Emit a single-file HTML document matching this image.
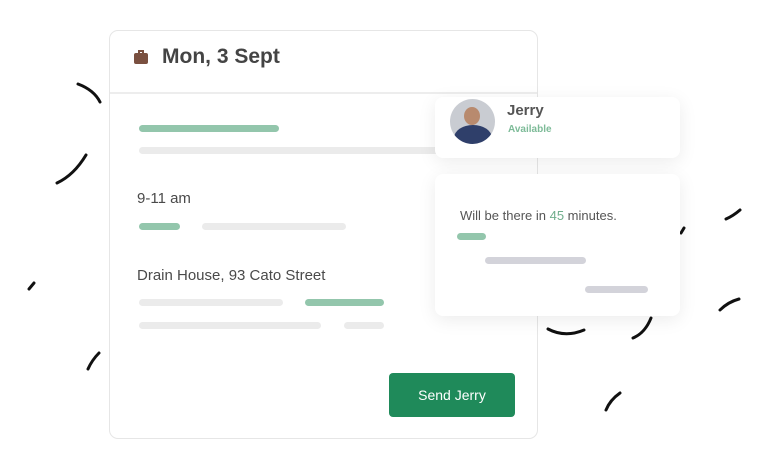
<!DOCTYPE html>
<html><head><style>
*{margin:0;padding:0;box-sizing:border-box}
body{width:768px;height:458px;background:#fff;position:relative;overflow:hidden;font-family:"Liberation Sans",sans-serif}
.card{position:absolute;left:109px;top:30px;width:429px;height:409px;border:1.5px solid #e6e6e6;border-radius:9px;background:#fff}
.hdr{position:absolute;left:0;top:0;width:100%;height:63px;border-bottom:2px solid #ededed}
.bar{position:absolute;height:7px;border-radius:4px}
.g{background:#93c6ac}.l{background:#ebebeb}.d{background:#d3d3da}
.t{position:absolute;color:#4a4a4a;font-size:15px}
.pop{position:absolute;background:#fff;border-radius:8px;box-shadow:0 4px 18px rgba(0,0,0,.08)}
.btn{position:absolute;left:389px;top:373px;width:126px;height:44px;background:#1f8a5a;border-radius:4px;color:#fff;font-size:14px;text-align:center;line-height:44px}
</style></head><body>
<svg width="768" height="458" style="position:absolute;left:0;top:0" fill="none" stroke="#111" stroke-width="3" stroke-linecap="round">
<path d="M78 84 Q94 90 100 102"/>
<path d="M86 155 Q74 175 57 183"/>
<path d="M34 283 L29 289"/>
<path d="M99 353 Q92 360 88 369"/>
<path d="M548 329 Q565 338 584 330"/>
<path d="M651 318 Q645 333 633 338"/>
<path d="M740 210 Q733 216 726 219"/>
<path d="M739 299 Q728 302 720 310"/>
<path d="M684 228 L681 233"/>
<path d="M620 393 Q610 400 606 410"/>
</svg>
<div class="card">
<div class="hdr">
<div style="position:absolute;left:24px;top:22px;width:14px;height:11px;background:#7a5040;border-radius:2px"></div>
<div style="position:absolute;left:28px;top:19px;width:6px;height:4px;border:2px solid #7a5040;border-bottom:none"></div>
<div style="position:absolute;left:52px;top:14px;font-size:21px;font-weight:bold;color:#444">Mon, 3 Sept</div>
</div>
<div class="bar g" style="left:29px;top:94px;width:140px"></div>
<div class="bar l" style="left:29px;top:116px;width:300px"></div>
<div class="t" style="left:27px;top:159px">9-11 am</div>
<div class="bar g" style="left:29px;top:192px;width:41px"></div>
<div class="bar l" style="left:92px;top:192px;width:144px"></div>
<div class="t" style="left:27px;top:236px">Drain House, 93 Cato Street</div>
<div class="bar l" style="left:29px;top:268px;width:144px"></div>
<div class="bar g" style="left:195px;top:268px;width:79px"></div>
<div class="bar l" style="left:29px;top:291px;width:182px"></div>
<div class="bar l" style="left:234px;top:291px;width:40px"></div>
</div>
<div class="pop" style="left:435px;top:97px;width:245px;height:61px">
<div style="position:absolute;left:15px;top:2px;width:45px;height:45px;border-radius:50%;overflow:hidden;background:#c9ccd2">
<div style="position:absolute;left:14px;top:8px;width:16px;height:18px;border-radius:50%;background:#b88a6e"></div>
<div style="position:absolute;left:4px;top:26px;width:38px;height:26px;border-radius:50% 50% 0 0;background:#2f3f6a"></div>
</div>
<div style="position:absolute;left:72px;top:5px;font-size:15px;font-weight:bold;color:#555">Jerry</div>
<div style="position:absolute;left:73px;top:27px;font-size:10px;font-weight:bold;color:#7dbb98">Available</div>
</div>
<div class="pop" style="left:435px;top:174px;width:245px;height:142px">
<div style="position:absolute;left:25px;top:34px;font-size:13px;color:#555">Will be there in <span style="color:#6fae8c">45</span> minutes.</div>
<div class="bar g" style="left:22px;top:59px;width:29px"></div>
<div class="bar d" style="left:50px;top:83px;width:101px"></div>
<div class="bar d" style="left:150px;top:112px;width:63px"></div>
</div>
<div class="btn">Send Jerry</div>
</body></html>
